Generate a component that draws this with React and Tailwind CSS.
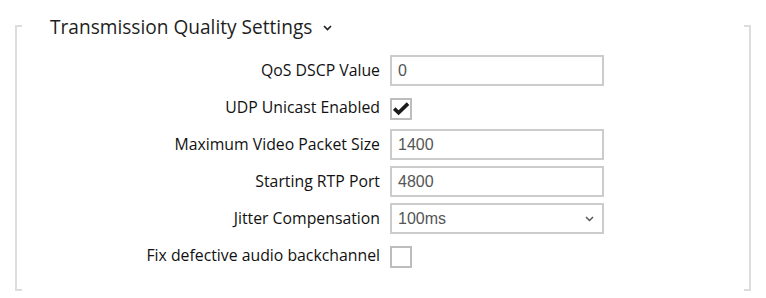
import React from "react";

const rows = [
  { label: "QoS DSCP Value", type: "text", value: "0" },
  { label: "UDP Unicast Enabled", type: "check", checked: true },
  { label: "Maximum Video Packet Size", type: "text", value: "1400" },
  { label: "Starting RTP Port", type: "text", value: "4800" },
  { label: "Jitter Compensation", type: "select", value: "100ms" },
  { label: "Fix defective audio backchannel", type: "check", checked: false },
];

function Checkbox({ checked }) {
  return (
    <div className="w-[22px] h-[22px] border-2 border-[#bdbdbd] bg-white flex items-center justify-center">
      {checked && (
        <svg width="18" height="18" viewBox="0 0 18 18">
          <path d="M2.2 8.6 L6.6 12.8 L16 3.6" fill="none" stroke="#1a1a1a" strokeWidth="3.6" strokeLinejoin="miter" strokeLinecap="butt" />
        </svg>
      )}
    </div>
  );
}

function Field({ row }) {
  if (row.type === "check") {
    return (
      <div className="pt-[3px] flex items-center">
        <Checkbox checked={row.checked} />
      </div>
    );
  }
  return (
    <div className="flex items-center">
      <div className="w-[214px] h-[31px] border-2 border-[#cccccc] bg-white flex items-center justify-between pl-[6px] pr-[8px] text-[16px] text-[#555555] [font-family:'Liberation_Sans',Arial,sans-serif]">
        <span>{row.value}</span>
        {row.type === "select" && (
          <svg width="9" height="6" viewBox="0 0 9 6">
            <path d="M1 1 L4.5 4.5 L8 1" fill="none" stroke="#555555" strokeWidth="1.5" />
          </svg>
        )}
      </div>
    </div>
  );
}

export default function App() {
  return (
    <div className="w-[766px] h-[298px] bg-white pt-[25px] px-[15px] [font-family:'Open_Sans','Noto_Sans',sans-serif]">
      <div className="relative flow-root h-[266px] border-x-2 border-[#dddddd]">
        <span className="absolute -left-[2px] top-0 w-[7px] h-[2px] bg-[#dddddd]" />
        <span className="absolute -right-[2px] top-0 w-[7px] h-[2px] bg-[#dddddd]" />
        <span className="absolute -left-[2px] bottom-0 w-[7px] h-[2px] bg-[#dddddd]" />
        <span className="absolute -right-[2px] bottom-0 w-[7px] h-[2px] bg-[#dddddd]" />

        <div className="-mt-[10px] ml-[33px] h-[24px] flex items-center gap-[11px] text-[19.1px] leading-[24px] text-[#1e1e1e]">
          <span>Transmission Quality Settings</span>
          <svg width="9" height="6" viewBox="0 0 9 6" className="mt-[2px]">
            <path d="M1 1 L4.5 4.5 L8 1" fill="none" stroke="#1e1e1e" strokeWidth="1.6" />
          </svg>
        </div>

        <div className="mt-[13px] grid grid-cols-[363px_214px] gap-x-[10px]">
          {rows.map((row) => (
            <React.Fragment key={row.label}>
              <div className="h-[37px] flex items-center justify-end text-[15.8px] text-[#111111]">
                {row.label}
              </div>
              <div className="h-[37px] flex items-center">
                <Field row={row} />
              </div>
            </React.Fragment>
          ))}
        </div>
      </div>
    </div>
  );
}
